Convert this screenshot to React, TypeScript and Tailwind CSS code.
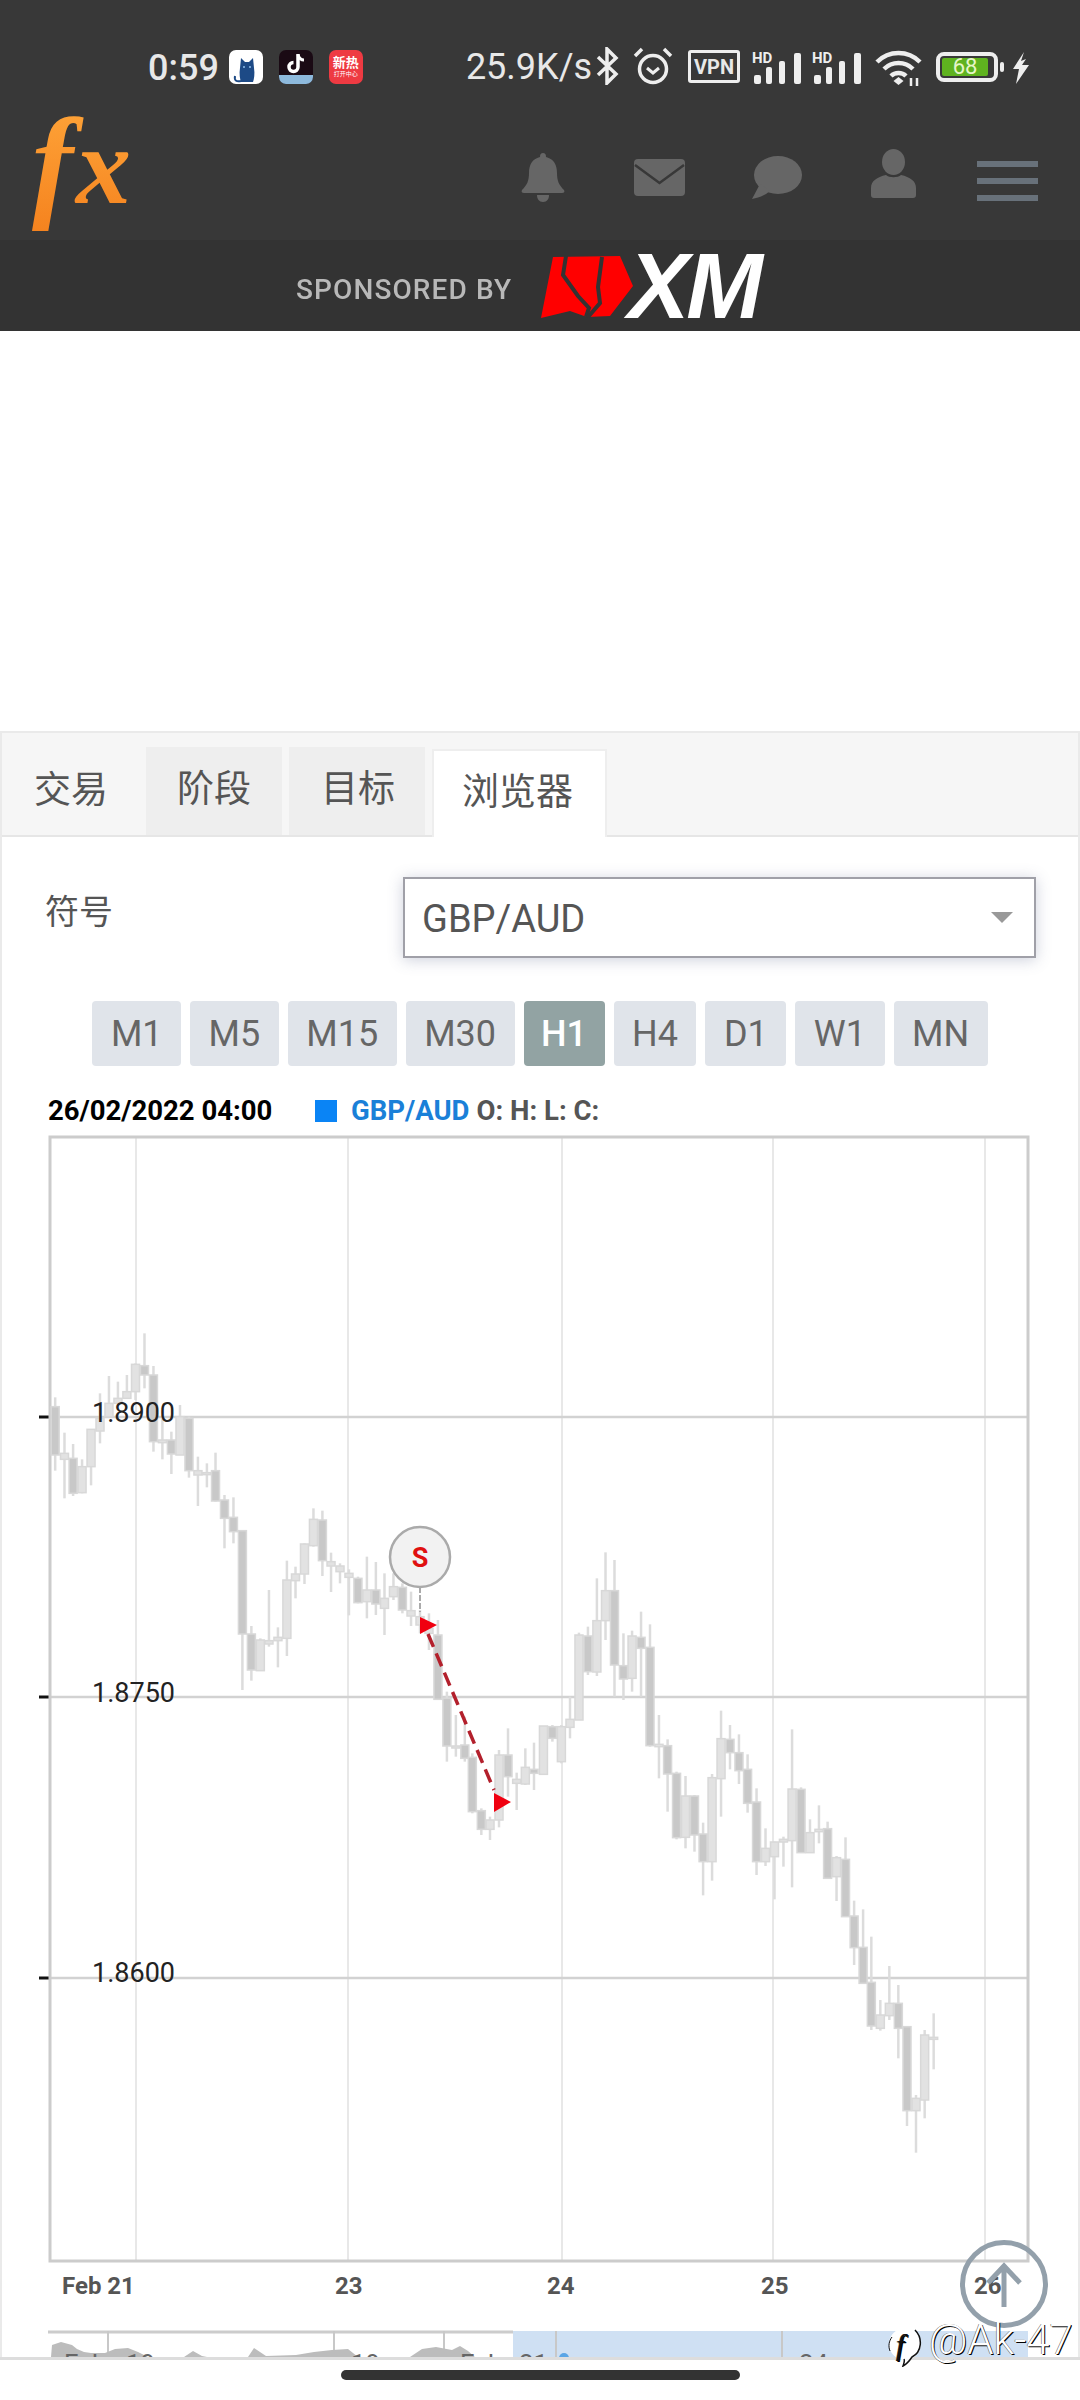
type Candle = [number, number, number, number, number, number];

// candle readings: x, wick top, wick bottom, body top, body bottom, dark
const groupA: Candle[] = [
  [160, 292, 512, 320, 465, 1], [187, 398, 595, 460, 478, 0], [212, 432, 588, 475, 580, 1], [238, 478, 580, 500, 578, 0],
  [264, 388, 556, 388, 500, 0], [290, 280, 430, 355, 393, 0], [316, 228, 350, 310, 350, 0], [342, 245, 310, 295, 310, 0],
  [368, 225, 295, 275, 295, 0], [393, 190, 300, 193, 275, 0], [419, 100, 265, 197, 225, 1], [445, 198, 455, 225, 425, 1],
  [471, 355, 478, 420, 428, 0], [497, 395, 522, 420, 462, 1], [522, 315, 465, 350, 465, 0], [548, 350, 533, 355, 512, 1],
  [574, 470, 618, 512, 525, 0], [600, 490, 562, 518, 522, 0], [625, 458, 605, 512, 603, 1], [651, 585, 745, 600, 655, 1],
  [677, 592, 730, 652, 695, 1], [703, 690, 1170, 692, 1002, 1], [729, 978, 1142, 1002, 1110, 1], [755, 1015, 1112, 1020, 1112, 0],
  [780, 870, 1040, 1022, 1032, 0], [806, 982, 1102, 1012, 1022, 0], [832, 782, 1068, 840, 1015, 0], [857, 800, 895, 822, 842, 0],
  [883, 730, 852, 732, 822, 0], [909, 625, 740, 658, 737, 0], [935, 632, 828, 660, 782, 1], [960, 758, 876, 785, 798, 0],
  [986, 790, 850, 798, 815, 0], [1012, 808, 946, 820, 832, 0], [1038, 830, 910, 835, 908, 1], [1064, 770, 955, 870, 905, 0],
  [1090, 786, 945, 870, 912, 1], [1115, 820, 1005, 895, 925, 0], [1141, 820, 900, 860, 890, 0], [1167, 850, 940, 862, 930, 1],
  [1192, 875, 978, 932, 948, 0], [1218, 930, 1000, 950, 975, 0], [1244, 940, 1050, 985, 1000, 0], [1270, 960, 1198, 1005, 1198, 1],
  [1296, 1175, 1385, 1195, 1338, 1], [1322, 1245, 1370, 1338, 1342, 0], [1348, 1250, 1385, 1335, 1375, 1],
];
const groupB: Candle[] = [
  [97, 100, 280, 112, 275, 1], [124, 265, 345, 272, 328, 1], [150, 290, 360, 300, 328, 0], [177, 90, 322, 105, 300, 0],
  [204, 25, 230, 105, 170, 1], [230, 158, 270, 178, 190, 0], [256, 85, 195, 142, 192, 0], [282, 68, 210, 148, 160, 1],
];
const groupC: Candle[] = [
  [10, 678, 823, 678, 823, 0], [36, 675, 725, 680, 715, 1], [62, 675, 790, 680, 785, 0], [87, 590, 715, 658, 682, 0],
  [113, 398, 660, 405, 660, 0], [139, 380, 525, 408, 515, 1], [165, 235, 528, 362, 516, 0], [190, 157, 420, 272, 362, 0],
  [216, 180, 590, 272, 495, 1], [242, 400, 600, 497, 537, 1], [267, 392, 575, 408, 535, 0], [293, 335, 590, 412, 445, 1],
  [319, 373, 740, 442, 737, 1], [345, 645, 835, 733, 740, 0], [370, 718, 935, 737, 822, 1], [396, 815, 1018, 820, 1013, 1],
  [422, 828, 1045, 888, 1012, 0], [448, 885, 1055, 888, 1005, 1], [473, 968, 1186, 1002, 1085, 1], [499, 822, 1142, 833, 1085, 0],
  [525, 632, 950, 716, 836, 0], [551, 675, 808, 718, 758, 1], [577, 703, 852, 758, 812, 1], [602, 763, 938, 808, 910, 1],
  [628, 865, 1125, 906, 1085, 1], [654, 985, 1098, 1045, 1085, 0], [680, 1025, 1198, 1026, 1070, 0], [706, 1010, 1100, 1018, 1026, 0],
  [731, 688, 1162, 867, 1022, 0], [757, 862, 1058, 868, 1058, 1], [783, 958, 1058, 998, 1058, 0], [809, 916, 1030, 988, 995, 0],
  [834, 965, 1135, 986, 1135, 1], [860, 1068, 1203, 1073, 1130, 0], [886, 1012, 1250, 1078, 1250, 1], [911, 1202, 1395, 1248, 1343, 1],
  [937, 1228, 1450, 1342, 1450, 1],
];
const groupD: Candle[] = [
  [94, -40, 240, 97, 228, 1], [121, 150, 242, 195, 235, 0], [148, 48, 210, 160, 197, 0], [175, 105, 325, 160, 235, 1],
  [201, 228, 528, 230, 482, 1], [228, 435, 608, 445, 482, 0], [254, 240, 505, 255, 450, 0], [281, 190, 358, 262, 268, 0],
];

const toPage = (list: Candle[], ox: number, sx: number, oy: number): Candle[] =>
  list.map(([x, a, b, c, d, dark]) => [ox + x / sx, oy + a / 3, oy + b / 3, oy + c / 3, oy + d / 3, dark]);

const candles: Candle[] = [
  ...toPage(groupA, 0, 2.9, 1300),
  ...toPage(groupB, 440, 3, 1720),
  ...toPage(groupC, 540, 2.9, 1500),
  ...toPage(groupD, 840, 3, 1950),
];

const timeframes = ["M1", "M5", "M15", "M30", "H1", "H4", "D1", "W1", "MN"];

function SignalIcon() {
  return (
    <svg width="50" height="32" viewBox="0 0 50 32" className="block overflow-visible">
      <text x="0" y="11" fontFamily="Roboto" fontWeight="700" fontSize="15" fill="#eee">HD</text>
      <rect x="2" y="23" width="7" height="9" rx="2" fill="#eee" />
      <rect x="14" y="15" width="6" height="17" rx="2" fill="#eee" />
      <rect x="27" y="9" width="6" height="23" rx="2" fill="#eee" />
      <rect x="42" y="1" width="7" height="31" rx="2" fill="#eee" />
    </svg>
  );
}

function StatusBar() {
  return (
    <div className="flex h-[85px] items-start pl-[148px] pt-[47px] text-[#e8e8e8]">
      <span className="mt-[2px] text-[36px] leading-[38px] font-medium">0:59</span>
      <div className="mt-[3px] ml-[10px] flex h-[34px] w-[34px] items-end justify-center rounded-[7px] bg-white">
        <svg width="28" height="28" viewBox="0 0 28 28">
          <path d="M9 2l4 4h4l4-4 1 10c1 6 0 11-1 14H9c-1-3-2-8-1-14z" fill="#1d4a86" />
          <path d="M9 25c-4 1-7 0-6-5" stroke="#1d4a86" strokeWidth="2" fill="none" />
          <circle cx="12" cy="11" r="1" fill="#8fc0ee" />
          <circle cx="18" cy="11" r="1" fill="#8fc0ee" />
        </svg>
      </div>
      <div className="relative mt-[3px] ml-[16px] flex h-[34px] w-[34px] justify-center overflow-hidden rounded-[7px] bg-[#1a0a14]">
        <svg width="22" height="24" viewBox="0 0 22 24" className="mt-[2px]">
          <path d="M13 2v13a4.500 4.500 0 1 1-4.500-4.500" stroke="#fff" strokeWidth="3.500" fill="none" />
          <path d="M13 3c1 3 3 5 6 5" stroke="#fff" strokeWidth="3" fill="none" />
        </svg>
        <div className="absolute right-0 bottom-0 left-0 h-[9px] bg-[#8db9dc]" />
      </div>
      <div className="mt-[3px] ml-[16px] flex h-[34px] w-[34px] flex-col items-center rounded-[7px] bg-[#ee3a42] pt-[5px] text-white">
        <span className="text-[13px] leading-[15px] font-bold">新热</span>
        <span className="text-[6px] leading-[8px]">打开中心</span>
      </div>
      <span className="mt-[1px] ml-[103px] text-[36px] leading-[38px]">25.9K/s</span>
      <svg width="26" height="38" viewBox="0 0 24 38" className="ml-[2px]">
        <path d="M3 10l18 17-9 9V2l9 9L3 28" stroke="#eee" strokeWidth="3.500" fill="none" />
      </svg>
      <svg width="42" height="38" viewBox="0 0 40 38" className="ml-[12px]">
        <circle cx="20" cy="22" r="13.500" stroke="#eee" strokeWidth="3.500" fill="none" />
        <path d="M14 21l6 5 6-5" stroke="#eee" strokeWidth="3" fill="none" />
        <path d="M2 9l7-7M38 9l-7-7" stroke="#eee" strokeWidth="3.500" />
      </svg>
      <div className="mt-[3px] ml-[14px] flex h-[33px] w-[52px] items-center justify-center rounded-[3px] border-[3px] border-[#eee] text-[20px] font-bold">VPN</div>
      <div className="mt-[5px] ml-[12px]"><SignalIcon /></div>
      <div className="mt-[5px] ml-[10px]"><SignalIcon /></div>
      <svg width="47" height="36" viewBox="0 0 47 36" className="mt-[3px] ml-[13px]">
        <path d="M2 12c12-12 31-12 43 0M9 19c8-8 21-8 29 0M16 26c4-4 11-4 15 0" stroke="#eee" strokeWidth="4.500" fill="none" />
        <path d="M23.500 27l-5 4 5 4 5-4z" fill="#eee" />
        <path d="M36 28v8M42 28v8" stroke="#eee" strokeWidth="2.500" />
      </svg>
      <div className="mt-[5px] ml-[14px] flex h-[30px] w-[62px] items-center rounded-[8px] border-[4px] border-[#eee] pl-[2px]">
        <div className="flex h-[18px] w-[46px] items-center justify-center rounded-[2px] bg-[#5fb31f] text-[22px] leading-none text-[#e6f6c8]">68</div>
      </div>
      <div className="mt-[15px] ml-[2px] h-[10px] w-[4px] rounded-[2px] bg-[#eee]" />
      <svg width="18" height="32" viewBox="0 0 18 32" className="mt-[5px] ml-[8px]">
        <path d="M12 0L1 17h6l-3 15 13-19h-7l4-6-5 2z" fill="#eee" />
      </svg>
    </div>
  );
}

function NavRow() {
  return (
    <div className="flex h-[155px] items-start">
      <svg width="112" height="112" viewBox="0 0 112 112" className="mt-[34px] ml-[26px] overflow-visible">
        <defs>
          <linearGradient id="fxOrange" x1="0" y1="0" x2="0" y2="1">
            <stop offset="0" stopColor="#ffa63a" />
            <stop offset="1" stopColor="#f5831f" />
          </linearGradient>
        </defs>
        <text x="6" y="85" fontFamily="Liberation Serif" fontStyle="italic" fontWeight="700" fontSize="124" fill="url(#fxOrange)">f</text>
        <text x="50" y="84" fontFamily="Liberation Serif" fontStyle="italic" fontWeight="700" fontSize="110" fill="url(#fxOrange)">x</text>
      </svg>
      <svg width="44" height="49" viewBox="0 0 44 49" className="mt-[68px] ml-[383px]">
        <path d="M22 0c2 0 3 1 3 4 8 2 11 8 11 16 0 8 2 12 7 17 1 2 0 3-2 3H3c-2 0-3-1-2-3 5-5 7-9 7-17 0-8 3-14 11-16 0-3 1-4 3-4z" fill="#666" />
        <path d="M16 42h12c0 4-2 7-6 7s-6-3-6-7z" fill="#666" />
      </svg>
      <svg width="51" height="37" viewBox="0 0 51 37" className="mt-[74px] ml-[69px]">
        <rect width="51" height="37" rx="4" fill="#666" />
        <path d="M1 6l24.500 18L50 6" stroke="#383838" strokeWidth="2.500" fill="none" />
      </svg>
      <svg width="50" height="43" viewBox="0 0 50 43" className="mt-[71px] ml-[67px]">
        <ellipse cx="26" cy="19" rx="24" ry="19" fill="#666" />
        <path d="M8 28L0 43c6-1 12-3 18-8z" fill="#666" />
      </svg>
      <svg width="45" height="49" viewBox="0 0 45 49" className="mt-[64px] ml-[69px]">
        <ellipse cx="22.500" cy="13" rx="11.500" ry="13" fill="#666" />
        <path d="M15 26c3 3 12 3 15 0 9 2 15 6 15 13v7c0 2-1 3-3 3H3c-2 0-3-1-3-3v-7c0-7 6-11 15-13z" fill="#666" />
      </svg>
      <div className="mt-[76px] ml-[61px] flex w-[61px] flex-col gap-[11px]">
        <div className="h-[6px] bg-[#68717a]" />
        <div className="h-[6px] bg-[#68717a]" />
        <div className="h-[6px] bg-[#68717a]" />
      </div>
    </div>
  );
}

function SponsorBar() {
  return (
    <div className="flex h-[91px] items-center bg-[#333333] pl-[296px]">
      <span className="mt-[8px] w-[245px] text-[28px] leading-none font-medium tracking-[1.1px] text-[#b8b8b8] blur-[0.6px]">SPONSORED BY</span>
      <svg width="92" height="62" viewBox="541 257 92 62" className="mt-[2px]">
        <path d="M553 258l67-1 13 30-23 30-23 1-17-6-29 7z" fill="#f00" />
        <path d="M566 257l-3 19 15 21 11 12-3 9" stroke="#333" strokeWidth="4" fill="none" />
        <path d="M602 258l-4 30 2 16-12 14" stroke="#333" strokeWidth="4" fill="none" />
      </svg>
      <span className="ml-[-5px] text-[92px] leading-[62px] font-bold tracking-[-3px] text-white italic [font-family:'Liberation_Sans',sans-serif]">XM</span>
    </div>
  );
}

function Tabs() {
  return (
    <div className="flex h-[104px] items-end border-b-2 border-[#e6e6e6] bg-[#f6f6f6] text-[37px] leading-none text-[#555555]">
      <div className="flex h-[86px] w-[144px] items-center pb-[4px] pl-[32px]">交易</div>
      <div className="flex h-[88px] w-[136px] items-center bg-[#eeeeee] pb-[4px] pl-[31px]">阶段</div>
      <div className="ml-[7px] flex h-[88px] w-[136px] items-center bg-[#eeeeee] pb-[4px] pl-[32px]">目标</div>
      <div className="mb-[-2px] ml-[7px] flex h-[88px] w-[175px] items-center border-x-2 border-t-2 border-[#eeeeee] bg-white pb-[4px] pl-[28px]">浏览器</div>
    </div>
  );
}

function Chart() {
  return (
    <svg width="1076" height="1227" viewBox="2 1130 1076 1227" className="mt-[3px] block">
      {[136, 348, 562, 773, 985].map((x) => (
        <line key={x} x1={x} x2={x} y1="1137" y2="2261" stroke="#e8e8e8" strokeWidth="2" />
      ))}
      {[1417, 1697, 1978].map((y) => (
        <g key={y}>
          <line x1="50" x2="1028" y1={y} y2={y} stroke="#d2d2d2" strokeWidth="2.500" />
          <line x1="39" x2="50" y1={y} y2={y} stroke="#111" strokeWidth="3" />
        </g>
      ))}
      <rect x="50" y="1137" width="978" height="1124" fill="none" stroke="#cccccc" strokeWidth="3" />
      {candles.map(([x, wickTop, wickBottom, top, bottom, dark], i) => (
        <g key={i}>
          <line x1={x} x2={x} y1={wickTop} y2={wickBottom} stroke="#dcdcdc" strokeWidth="2.500" />
          <rect x={x - 4} y={top} width="8" height={Math.max(bottom - top, 2)} fill={dark ? "#c8c8c8" : "#e2e2e2"} stroke="#d8d8d8" strokeWidth="1.500" />
        </g>
      ))}
      <g fontFamily="Roboto" fontSize="27" fill="#222">
        <text x="92" y="1422">1.8900</text>
        <text x="92" y="1702">1.8750</text>
        <text x="92" y="1982">1.8600</text>
      </g>
      <line x1="420" x2="420" y1="1587" y2="1612" stroke="#aaa" strokeWidth="2" strokeDasharray="6 2" />
      <circle cx="420" cy="1557" r="30" fill="#f2f2f2" stroke="#aaaaaa" strokeWidth="2.500" />
      <text x="420" y="1567" textAnchor="middle" fontFamily="Roboto" fontWeight="700" fontSize="27" fill="#e01010">S</text>
      <line x1="428" x2="494" y1="1634" y2="1790" stroke="#b3202c" strokeWidth="3.500" strokeDasharray="14 7" />
      <path d="M420 1617l17 8-17 9z" fill="#f00010" />
      <path d="M494 1793l17 9-17 10z" fill="#f00010" />
      <g fontFamily="Roboto" fontWeight="700" fontSize="24" fill="#555">
        <text x="62" y="2294">Feb 21</text>
        <text x="335" y="2294">23</text>
        <text x="547" y="2294">24</text>
        <text x="761" y="2294">25</text>
        <text x="974" y="2294">26</text>
      </g>
      <rect x="513" y="2331" width="515" height="26" fill="#cfe0f3" />
      <line x1="48" x2="513" y1="2332" y2="2332" stroke="#cccccc" strokeWidth="3" />
      {[108, 334, 444, 556, 782].map((x) => (
        <line key={x} x1={x} x2={x} y1="2331" y2="2357" stroke="#c8c8c8" strokeWidth="2" />
      ))}
      <path d="M51 2357l1-12 9-3 11 3 5 4 7 3 7 1h14l10-4 13-1 10 4 10 5zM184 2357l9-6 9 5 5 1zM248 2357l6-9 12 8 30-1 18-3 18-2 16-1 10 8zM410 2357l12-8 14-2 16 3 8-4 8 5 8 7z" fill="#bcbcbc" />
      <g fontFamily="Roboto" fontSize="26" fill="#666">
        <text x="64" y="2373">Feb</text>
        <text x="126" y="2373">19</text>
        <text x="351" y="2373">19</text>
        <text x="460" y="2373">Feb</text>
        <text x="519" y="2373">21</text>
        <text x="799" y="2373">24</text>
      </g>
      <circle cx="564" cy="2358" r="5" fill="#5aa5e5" />
    </svg>
  );
}

export default function App() {
  return (
    <div className="relative h-[2400px] w-[1080px] overflow-hidden bg-white [font-family:Roboto,'Noto_Sans_CJK_SC',sans-serif]">
      <header className="h-[240px] bg-[#383838]">
        <StatusBar />
        <NavRow />
      </header>
      <SponsorBar />

      <main className="mt-[400px] h-[1626px] overflow-hidden border-x-2 border-t-2 border-[#eaeaea]">
        <Tabs />
        <div className="flex pt-[40px] pr-[42px]">
          <span className="mt-[18px] w-[401px] pl-[43px] text-[34px] leading-none text-[#555555]">符号</span>
          <div className="flex h-[81px] flex-1 items-center justify-between border-2 border-[#a0a0a8] pr-[21px] pl-[17px] shadow-[0_2px_14px_rgba(90,100,140,0.3)]">
            <span className="mt-[2px] text-[38px] leading-none text-[#555555]">GBP/AUD</span>
            <div className="h-0 w-0 border-x-[11px] border-t-[11px] border-x-transparent border-t-[#999999]" />
          </div>
        </div>
        <div className="mt-[43px] flex justify-center gap-[9px]">
          {timeframes.map((t) => (
            <div
              key={t}
              className={
                t === "H1"
                  ? "flex h-[65px] items-center rounded-[4px] bg-[#92a3a3] px-[17.5px] text-[36px] font-medium text-white"
                  : "flex h-[65px] items-center rounded-[4px] bg-[#e0e4ea] px-[18.5px] text-[36px] text-[#666666]"
              }
            >
              {t}
            </div>
          ))}
        </div>
        <div className="mt-[28px] flex h-[33px] items-center pl-[46px] text-[27.5px] leading-none font-bold">
          <span className="w-[267px] text-black">26/02/2022 04:00</span>
          <div className="h-[22px] w-[22px] bg-[#0a84f5]" />
          <span className="ml-[14px] text-[#1a80d8]">GBP/AUD</span>
          <span className="ml-[7px] text-[#555555]">O: H: L: C:</span>
        </div>
        <Chart />
      </main>

      <footer className="flex h-[43px] justify-center border-t-[3px] border-[#dddddd] bg-white pt-[10px]">
        <div className="h-[10px] w-[399px] rounded-[5px] bg-[#333333]" />
      </footer>

      <svg width="90" height="90" viewBox="0 0 90 90" className="absolute top-[2239px] left-[959px]">
        <circle cx="45" cy="45" r="41.500" fill="none" stroke="#93a0ab" strokeWidth="5" />
        <path d="M45 68V28M29 44l16-17 16 17" fill="none" stroke="#93a0ab" strokeWidth="5" />
      </svg>

      <div className="absolute top-[2317px] left-[887px] flex items-start text-white [text-shadow:1px_1px_0_#000,-0.5px_0_0_#555]">
        <svg width="36" height="40" viewBox="0 0 36 40" className="mt-[10px]">
          <circle cx="18" cy="17" r="16" fill="#fff" />
          <path d="M28 3c8 8 7 22-3 27-2 3-5 7-9 9 1-3 2-5 1-7" fill="none" stroke="#111" strokeWidth="1.500" />
          <path d="M3 24c-2-5-1-10 2-14" fill="none" stroke="#111" strokeWidth="1" />
          <text x="9" y="28" fontFamily="Liberation Serif" fontStyle="italic" fontSize="30" fill="#111">f</text>
        </svg>
        <span className="ml-[6px] text-[42px] leading-[46px] font-light">@Ak-47</span>
      </div>
    </div>
  );
}
